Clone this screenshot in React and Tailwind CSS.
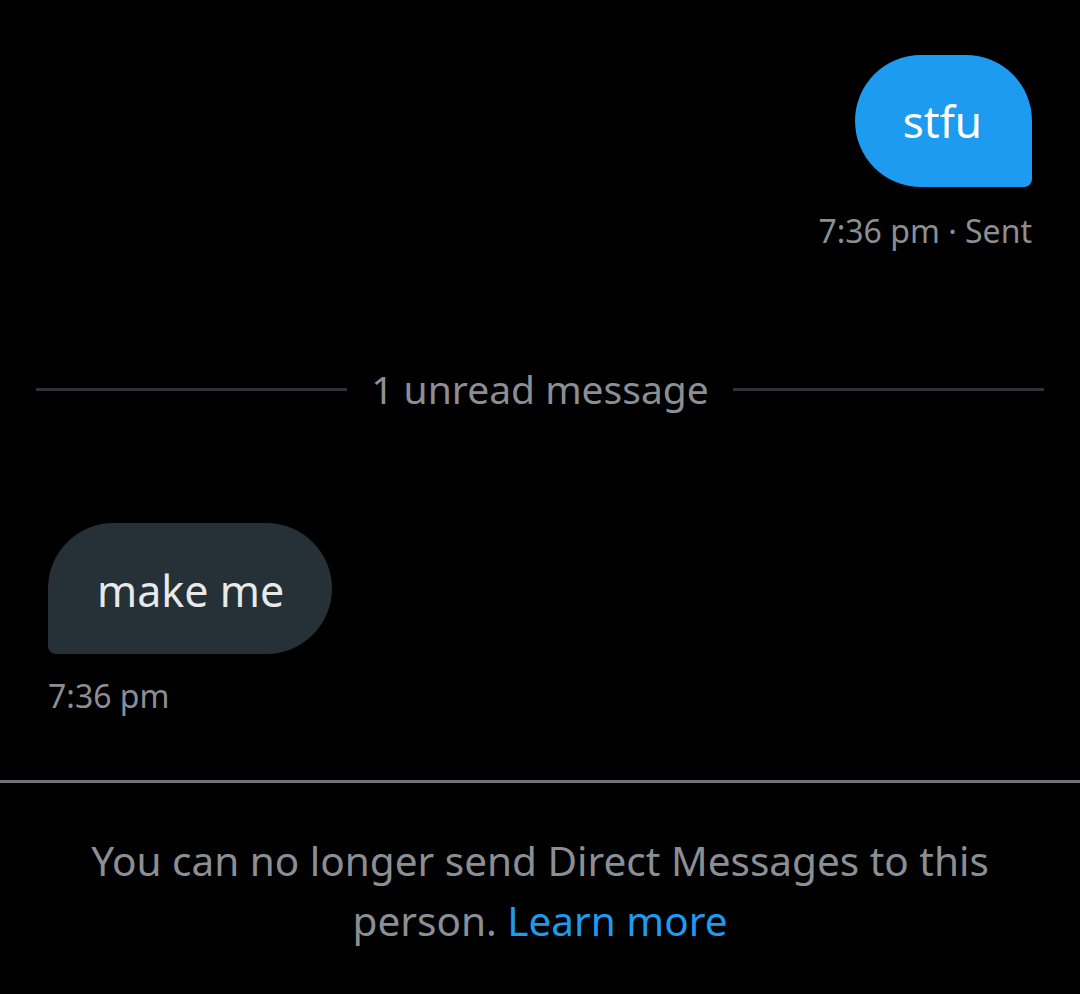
export default function App() {
  return (
    <div className="w-[1080px] h-[994px] bg-black overflow-hidden flex flex-col" style={{ fontFamily: '"Noto Sans", Roboto, sans-serif' }}>
      <div className="flex flex-col items-end pr-[48px] pt-[55px]">
        <div className="h-[132px] bg-[#1d9bf0] rounded-tl-[66px] rounded-tr-[66px] rounded-bl-[66px] rounded-br-[8px] pl-[48px] pr-[50px] flex items-center text-white text-[44px] leading-none">
          <span>stfu</span>
        </div>
        <div className="mt-[26px] text-[32px] leading-[36px] text-[#8b8f94]">7:36 pm · Sent</div>
      </div>
      <div className="mt-[118px] flex items-center px-[36px]">
        <div className="flex-1 h-[3px] bg-[#2f3336]"></div>
        <div className="px-[24px] text-[39px] leading-[44px] text-[#8b8f94]">1 unread message</div>
        <div className="flex-1 h-[3px] bg-[#2f3336]"></div>
      </div>
      <div className="mt-[112px] flex flex-col items-start pl-[48px]">
        <div className="h-[131px] bg-[#253037] rounded-tl-[66px] rounded-tr-[66px] rounded-br-[66px] rounded-bl-[8px] pl-[49px] pr-[48px] flex items-center text-[#e7e9ea] text-[43px] leading-none">
          <span className="mt-[4px]">make me</span>
        </div>
        <div className="mt-[24px] text-[32px] leading-[36px] text-[#8b8f94]">7:36 pm</div>
      </div>
      <div className="mt-[66px] h-[3px] bg-[#6e7378]"></div>
      <div className="mt-[48px] px-[20px] text-center text-[40.5px] leading-[60px] text-[#8b8f94]">
        You can no longer send Direct Messages to this<br />person. <span className="text-[#1d9bf0]">Learn more</span>
      </div>
    </div>
  );
}
